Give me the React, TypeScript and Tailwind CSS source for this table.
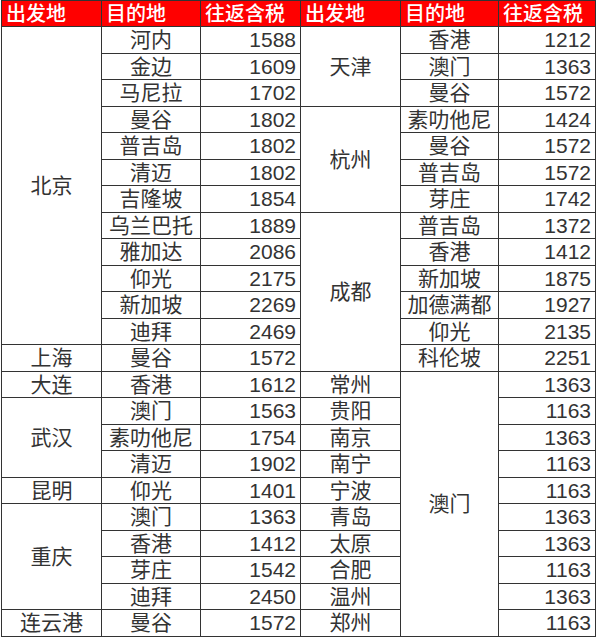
import React from "react";

type Cell = { text: string; span?: number; kind: "c" | "n" };

const leftGroups: { from: string; items: [string, string][] }[] = [
  {
    from: "北京",
    items: [
      ["河内", "1588"],
      ["金边", "1609"],
      ["马尼拉", "1702"],
      ["曼谷", "1802"],
      ["普吉岛", "1802"],
      ["清迈", "1802"],
      ["吉隆坡", "1854"],
      ["乌兰巴托", "1889"],
      ["雅加达", "2086"],
      ["仰光", "2175"],
      ["新加坡", "2269"],
      ["迪拜", "2469"],
    ],
  },
  { from: "上海", items: [["曼谷", "1572"]] },
  { from: "大连", items: [["香港", "1612"]] },
  {
    from: "武汉",
    items: [
      ["澳门", "1563"],
      ["素叻他尼", "1754"],
      ["清迈", "1902"],
    ],
  },
  { from: "昆明", items: [["仰光", "1401"]] },
  {
    from: "重庆",
    items: [
      ["澳门", "1363"],
      ["香港", "1412"],
      ["芽庄", "1542"],
      ["迪拜", "2450"],
    ],
  },
  { from: "连云港", items: [["曼谷", "1572"]] },
];

const rightGroups: { from: string; items: [string, string][] }[] = [
  {
    from: "天津",
    items: [
      ["香港", "1212"],
      ["澳门", "1363"],
      ["曼谷", "1572"],
    ],
  },
  {
    from: "杭州",
    items: [
      ["素叻他尼", "1424"],
      ["曼谷", "1572"],
      ["普吉岛", "1572"],
      ["芽庄", "1742"],
    ],
  },
  {
    from: "成都",
    items: [
      ["普吉岛", "1372"],
      ["香港", "1412"],
      ["新加坡", "1875"],
      ["加德满都", "1927"],
      ["仰光", "2135"],
      ["科伦坡", "2251"],
    ],
  },
];

const macau: [string, string][] = [
  ["常州", "1363"],
  ["贵阳", "1163"],
  ["南京", "1363"],
  ["南宁", "1163"],
  ["宁波", "1163"],
  ["青岛", "1363"],
  ["太原", "1363"],
  ["合肥", "1163"],
  ["温州", "1363"],
  ["郑州", "1163"],
];

function buildGroups(groups: { from: string; items: [string, string][] }[]): Cell[][] {
  const rows: Cell[][] = [];
  groups.forEach((g) => {
    g.items.forEach(([dest, price], j) => {
      const r: Cell[] = [];
      if (j === 0) r.push({ text: g.from, span: g.items.length, kind: "c" });
      r.push({ text: dest, kind: "c" });
      r.push({ text: price, kind: "n" });
      rows.push(r);
    });
  });
  return rows;
}

const leftRows = buildGroups(leftGroups);
const rightRows = buildGroups(rightGroups);
macau.forEach(([from, price], j) => {
  const r: Cell[] = [{ text: from, kind: "c" }];
  if (j === 0) r.push({ text: "澳门", span: macau.length, kind: "c" });
  r.push({ text: price, kind: "n" });
  rightRows.push(r);
});

const rows = leftRows.map((l, i) => [...l, ...rightRows[i]]);

const headers = ["出发地", "目的地", "往返含税", "出发地", "目的地", "往返含税"];

export default function App() {
  return (
    <div
      className="w-[600px] h-[637px] bg-white overflow-hidden"
      style={{ fontFamily: '"Liberation Sans", "Noto Sans CJK SC", sans-serif' }}
    >
      <table className="table-fixed border-collapse ml-px text-[21px] leading-none text-[#333]">
        <colgroup>
          <col className="w-[100px]" />
          <col className="w-[99px]" />
          <col className="w-[100px]" />
          <col className="w-[100px]" />
          <col className="w-[98px]" />
          <col className="w-[97px]" />
        </colgroup>
        <thead>
          <tr className="h-[26px]">
            {headers.map((h, i) => (
              <th
                key={i}
                className="border border-[#333] bg-[#ff0000] text-white text-[20px] font-medium text-left pl-1 p-0 align-middle"
              >
                {h}
              </th>
            ))}
          </tr>
        </thead>
        <tbody>
          {rows.map((r, i) => (
            <tr key={i} className="h-[26.5px]">
              {r.map((c, k) => (
                <td
                  key={k}
                  rowSpan={c.span}
                  className={
                    c.kind === "n"
                      ? "border border-[#333] p-0 pr-1 text-right align-middle"
                      : "border border-[#333] p-0 text-center align-middle"
                  }
                >
                  {c.text}
                </td>
              ))}
            </tr>
          ))}
        </tbody>
      </table>
    </div>
  );
}
